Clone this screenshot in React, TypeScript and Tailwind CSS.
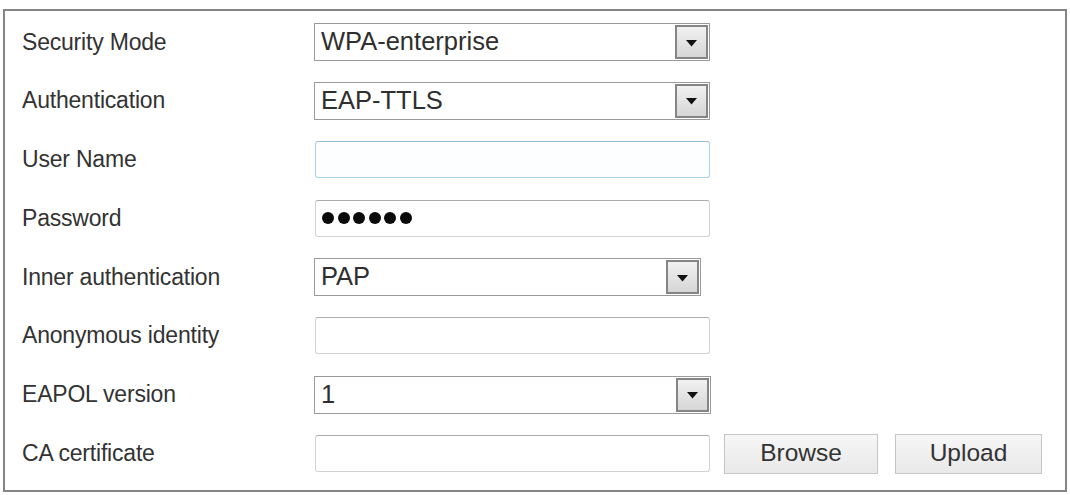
import React from "react";

const font = { fontFamily: '"Liberation Sans", Arial, sans-serif' };

function Label({ children }: { children: React.ReactNode }) {
  return (
    <div className="w-[292px] shrink-0 text-[23px] leading-none text-[#333333] tracking-[-0.2px]">
      {children}
    </div>
  );
}

function Select({ value, width }: { value: string; width: string }) {
  return (
    <div className={`${width} h-[38px] border border-[#9a9a9a] bg-white flex items-stretch`}>
      <div className="flex-1 flex items-center pl-[6px] text-[25.5px] leading-none text-[#2f2f2f]">
        {value}
      </div>
      <div className="w-[33px] my-[1px] mr-[1px] border-2 border-[#858585] bg-gradient-to-b from-[#f1f1f1] to-[#d6d6d6] flex items-center justify-center pt-[2px]">
        <svg width="11" height="7" viewBox="0 0 11 7">
          <path d="M0 0 L11 0 L5.5 6.5 Z" fill="#111111" />
        </svg>
      </div>
    </div>
  );
}

function Input({ focused, children }: { focused?: boolean; children?: React.ReactNode }) {
  return (
    <div
      className={
        focused
          ? "w-[395px] h-[37px] ml-[1px] rounded-[3px] border border-[#a9d2e4] border-t-[#98c0d4] bg-[#fcfeff] flex items-center pl-[6px]"
          : "w-[395px] h-[37px] ml-[1px] rounded-[3px] border border-[#d2d2d2] border-t-[#ababab] bg-white flex items-center pl-[6px]"
      }
    >
      {children}
    </div>
  );
}

function Row({ label, children }: { label: string; children: React.ReactNode }) {
  return (
    <div className="flex items-center h-[38px]">
      <Label>{label}</Label>
      {children}
    </div>
  );
}

function Button({ label, width, className }: { label: string; width: string; className: string }) {
  return (
    <div
      className={`${width} ${className} h-[40px] border border-[#c6c6c6] bg-gradient-to-b from-[#f6f6f6] to-[#e9e9e9] flex items-center justify-center text-[24.5px] leading-none text-[#333333]`}
    >
      {label}
    </div>
  );
}

export default function App() {
  return (
    <div className="w-[1070px] h-[495px] bg-white pt-[9px] pl-[3px]" style={font}>
      <div className="w-[1064px] h-[483px] border-2 border-[#858585] bg-white pl-[17px] pt-[12px] flex flex-col gap-[20.8px]">
        <Row label="Security Mode">
          <Select value="WPA-enterprise" width="w-[396px]" />
        </Row>
        <Row label="Authentication">
          <Select value="EAP-TTLS" width="w-[396px]" />
        </Row>
        <Row label="User Name">
          <Input focused />
        </Row>
        <Row label="Password">
          <Input>
            <div className="flex gap-[3.5px]">
              {[0, 1, 2, 3, 4, 5].map((i) => (
                <span key={i} className="block w-[12px] h-[12px] rounded-full bg-[#0a0a0a]" />
              ))}
            </div>
          </Input>
        </Row>
        <Row label="Inner authentication">
          <Select value="PAP" width="w-[387px]" />
        </Row>
        <Row label="Anonymous identity">
          <Input />
        </Row>
        <Row label="EAPOL version">
          <Select value="1" width="w-[397px]" />
        </Row>
        <Row label="CA certificate">
          <Input />
          <Button label="Browse" width="w-[154px]" className="ml-[14px]" />
          <Button label="Upload" width="w-[147px]" className="ml-[17px]" />
        </Row>
      </div>
    </div>
  );
}
